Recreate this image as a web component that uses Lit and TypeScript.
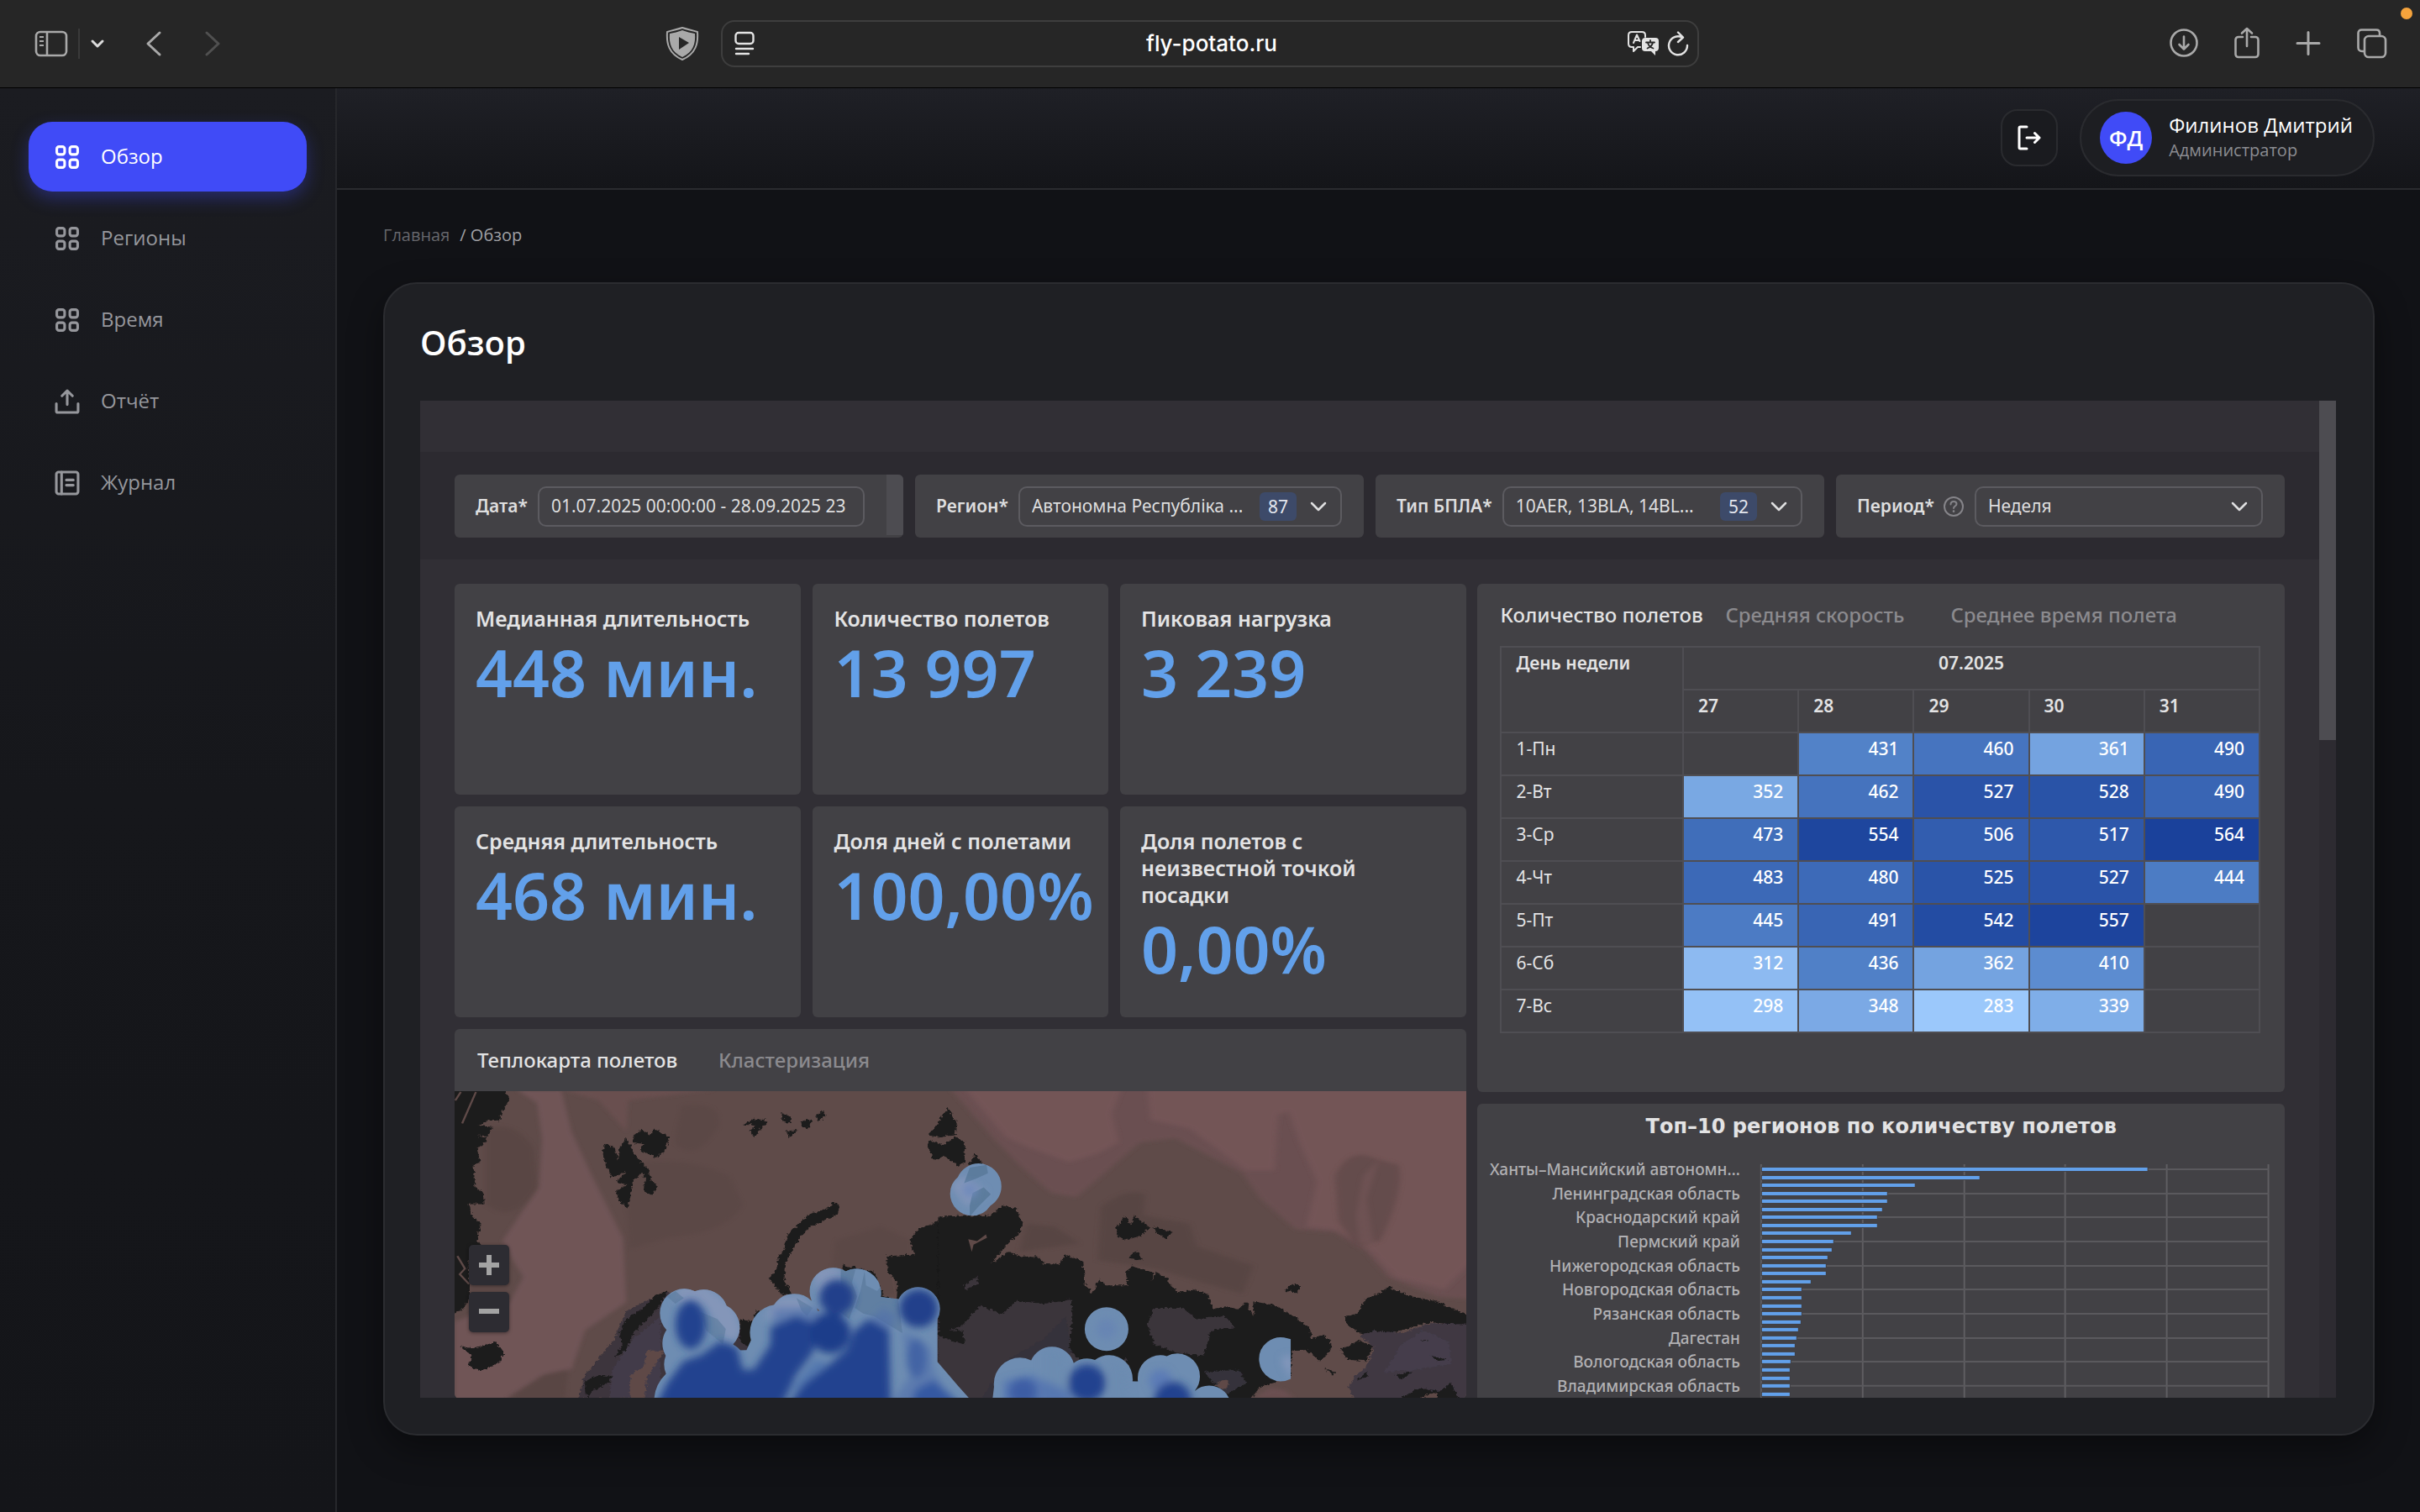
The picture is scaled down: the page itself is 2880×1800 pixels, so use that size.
import { LitElement, html, svg, css, nothing } from "lit";
import { customElement, property } from "lit/decorators.js";
import { classMap } from "lit/directives/class-map.js";
import { styleMap } from "lit/directives/style-map.js";

type NavItem = { label: string; icon: "grid" | "upload" | "book"; active?: boolean };

const NAV: NavItem[] = [
  { label: "Обзор", icon: "grid", active: true },
  { label: "Регионы", icon: "grid" },
  { label: "Время", icon: "grid" },
  { label: "Отчёт", icon: "upload" },
  { label: "Журнал", icon: "book" },
];

const KPIS = [
  { title: "Медианная длительность", value: "448 мин." },
  { title: "Количество полетов", value: "13 997" },
  { title: "Пиковая нагрузка", value: "3 239" },
  { title: "Средняя длительность", value: "468 мин." },
  { title: "Доля дней с полетами", value: "100,00%" },
  { title: "Доля полетов с неизвестной точкой посадки", value: "0,00%" },
];

const WEEKS = ["27", "28", "29", "30", "31"];
const DAYS: { day: string; values: (number | null)[] }[] = [
  { day: "1-Пн", values: [null, 431, 460, 361, 490] },
  { day: "2-Вт", values: [352, 462, 527, 528, 490] },
  { day: "3-Ср", values: [473, 554, 506, 517, 564] },
  { day: "4-Чт", values: [483, 480, 525, 527, 444] },
  { day: "5-Пт", values: [445, 491, 542, 557, null] },
  { day: "6-Сб", values: [312, 436, 362, 410, null] },
  { day: "7-Вс", values: [298, 348, 283, 339, null] },
];

const REGION_LABELS = [
  "Ханты–Мансийский автономн…",
  "Ленинградская область",
  "Краснодарский край",
  "Пермский край",
  "Нижегородская область",
  "Новгородская область",
  "Рязанская область",
  "Дагестан",
  "Вологодская область",
  "Владимирская область",
];
const REGION_BARS = [
  460, 260, 183, 150, 150, 144, 138, 138, 107, 86, 84, 79, 77, 77, 59, 48, 48, 48, 48, 47, 44, 42,
  40, 40, 35, 34, 34, 34, 34,
];

/** Three-stop scale: light blue, mid blue, dark blue. */
function heatColor(value: number): string {
  const stops = [
    [155, 200, 251],
    [85, 134, 203],
    [26, 65, 155],
  ];
  const t = ((value - 283) / (564 - 283)) * 2;
  const i = t >= 1 ? 1 : 0;
  const k = t - i;
  const rgb = stops[i].map((c, n) => Math.round(c + (stops[i + 1][n] - c) * k));
  return `rgb(${rgb.join(",")})`;
}

const chevronDown = html`<svg class="chev" viewBox="0 0 20 12" width="20" height="12" aria-hidden="true">
  <path d="M2 2l8 8 8-8" fill="none" stroke="#dededf" stroke-width="2.500" stroke-linecap="round" stroke-linejoin="round" />
</svg>`;

@customElement("browser-bar")
export class BrowserBar extends LitElement {
  static styles = css`
    :host {
      display: block;
      background: #262626;
      border-bottom: 1px solid #000;
      font-family: Inter, "Liberation Sans", sans-serif;
    }
    .bar {
      display: grid;
      grid-template-columns: 1fr 1164px 1fr;
      align-items: center;
      height: 104px;
      padding: 0 38px;
    }
    .side {
      display: flex;
      align-items: center;
    }
    .left {
      padding-left: 1px;
    }
    .right {
      justify-content: flex-end;
      gap: 41px;
    }
    button {
      display: flex;
      padding: 0;
      border: 0;
      background: none;
      color: #a9a9a9;
    }
    .split {
      width: 2px;
      height: 36px;
      margin: 0 12px;
      background: #3a3a3a;
    }
    .back {
      margin-left: 48px;
    }
    .forward {
      margin-left: 50px;
      color: #505050;
    }
    .shield {
      margin: 0 26px 0 auto;
    }
    .address {
      display: flex;
      align-items: center;
      height: 56px;
      box-sizing: border-box;
      padding: 0 10px 0 14px;
      border: 2px solid #3e3e3e;
      border-radius: 16px;
    }
    .address button {
      color: #e3e3e3;
    }
    input {
      flex: 1;
      min-width: 0;
      margin-left: 50px;
      border: 0;
      background: none;
      color: #fff;
      font: 500 26px/32px Inter, "Liberation Sans", sans-serif;
      text-align: center;
    }
    .reload {
      margin-left: 8px;
    }
    .dot {
      position: absolute;
      top: 9px;
      right: 9px;
      width: 14px;
      height: 14px;
      border-radius: 50%;
      background: #f5a33c;
    }
  `;

  render() {
    return html`<div class="bar">
      <div class="side left">
        <button aria-label="Боковое меню">
          <svg width="42" height="34" viewBox="0 0 42 34" fill="none" stroke="currentColor" stroke-width="2.600">
            <rect x="4" y="3" width="36" height="28" rx="5" />
            <path d="M17 3v28" />
            <path d="M8 9h5M8 14h5M8 19h5" stroke-width="2" />
          </svg>
        </button>
        <span class="split"></span>
        <button aria-label="Группы вкладок">
          <svg width="18" height="12" viewBox="0 0 18 12" fill="none" stroke="#dcdcdc" stroke-width="3" stroke-linecap="round" stroke-linejoin="round">
            <path d="M3 3l6 6 6-6" />
          </svg>
        </button>
        <button class="back" aria-label="Назад">
          <svg width="20" height="32" viewBox="0 0 20 32" fill="none" stroke="currentColor" stroke-width="3" stroke-linecap="round" stroke-linejoin="round">
            <path d="M17 3L3 16l14 13" />
          </svg>
        </button>
        <button class="forward" aria-label="Вперёд">
          <svg width="20" height="32" viewBox="0 0 20 32" fill="none" stroke="currentColor" stroke-width="3" stroke-linecap="round" stroke-linejoin="round">
            <path d="M3 3l14 13L3 29" />
          </svg>
        </button>
        <button class="shield" aria-label="Защита">
          <svg width="40" height="40" viewBox="0 0 40 40">
            <path d="M20 1C14 3 8 4 2 6c-1 14 2 26 18 33C36 32 39 20 38 6 32 4 26 3 20 1z" fill="none" stroke="#a9a9a9" stroke-width="2" stroke-linejoin="round" />
            <path d="M20 4c-5 2-10 3-15 4-1 12 2 22 15 28 13-6 16-16 15-28-5-1-10-2-15-4z" fill="#a9a9a9" />
            <path d="M16 12l12 7-12 8z" fill="#262626" />
          </svg>
        </button>
      </div>
      <div class="address">
        <button aria-label="Параметры страницы">
          <svg width="24" height="30" viewBox="0 0 24 30" fill="none" stroke="currentColor" stroke-width="2.400" stroke-linecap="round">
            <rect x="1.500" y="2" width="21" height="13" rx="3.500" />
            <path d="M2 21h20M2 27h15" />
          </svg>
        </button>
        <input aria-label="Адрес" .value=${"fly-potato.ru"} />
        <button aria-label="Перевод">
          <svg width="40" height="32" viewBox="0 0 40 32" fill="none" stroke="currentColor" stroke-linejoin="round" stroke-linecap="round">
            <path d="M16 20h-3l-5 5v-5H6c-3 0-4-1.500-4-4V6c0-2.500 1.500-4 4-4h12c2.500 0 4 1.500 4 4v2" stroke-width="2" />
            <path d="M8 15l4-9.500L15.500 13M9.500 12H14" stroke-width="2" />
            <path d="M22 9h12c3 0 4 1.500 4 4v8c0 2.500-1.500 4-4 4v5l-5-5h-7c-3 0-4-1.500-4-4v-8c0-2.500 1.500-4 4-4z" fill="currentColor" stroke="none" />
            <path d="M23 14.500h10M28 12v2M24.500 21.500c4-1.500 6-4 6.500-7M25 15c1 3.500 3 5.500 6.500 6.500" stroke="#262626" stroke-width="1.800" />
          </svg>
        </button>
        <button class="reload" aria-label="Обновить">
          <svg width="26" height="32" viewBox="0 0 26 32" fill="none" stroke="currentColor" stroke-width="2.400" stroke-linecap="round" stroke-linejoin="round">
            <path d="M18 8.500A11 11 0 1 0 24 18M13 2.500l6 6-6 5.500" />
          </svg>
        </button>
      </div>
      <div class="side right">
        <button aria-label="Загрузки">
          <svg width="36" height="38" viewBox="0 0 36 38" fill="none" stroke="currentColor" stroke-width="2.600" stroke-linecap="round" stroke-linejoin="round">
            <circle cx="18" cy="18" r="15.500" />
            <path d="M18 10.500v15M12.500 20l5.500 5.500 5.500-5.500" />
          </svg>
        </button>
        <button aria-label="Поделиться">
          <svg width="32" height="42" viewBox="0 0 32 42" fill="none" stroke="currentColor" stroke-width="2.600" stroke-linecap="round" stroke-linejoin="round">
            <path d="M11 13H6c-2 0-3.500 1.500-3.500 3.500v17C2.500 35.500 4 37 6 37h20c2 0 3.500-1.500 3.500-3.500v-17c0-2-1.500-3.500-3.500-3.500h-5M16 24V3M10 8.500L16 3l6 5.500" />
          </svg>
        </button>
        <button aria-label="Новая вкладка">
          <svg width="32" height="32" viewBox="0 0 32 32" fill="none" stroke="currentColor" stroke-width="3" stroke-linecap="round">
            <path d="M16 2.500v26M3 15.500h26" />
          </svg>
        </button>
        <button aria-label="Все вкладки">
          <svg width="38" height="38" viewBox="0 0 38 38" fill="none" stroke="currentColor" stroke-width="2.600">
            <rect x="10" y="10" width="25" height="25" rx="5" />
            <path d="M9.500 28H7c-3 0-4.500-2-4.500-4.500V6.500C2.500 4 4 2.500 6.500 2.500H24c2.500 0 4 1.500 4 4V9" />
          </svg>
        </button>
      </div>
      <span class="dot"></span>
    </div>`;
  }
}

@customElement("side-nav")
export class SideNav extends LitElement {
  static styles = css`
    :host {
      display: block;
      box-sizing: border-box;
      width: 401px;
      padding: 40px 34px;
      border-right: 2px solid #26272b;
      background: linear-gradient(#1b1c21, #16171b 50%, #141519);
      font-family: "Open Sans", "Noto Sans", sans-serif;
    }
    nav {
      display: flex;
      flex-direction: column;
      gap: 14px;
    }
    a {
      display: flex;
      align-items: center;
      gap: 25px;
      height: 83px;
      padding-left: 31px;
      border-radius: 28px;
      color: #96979c;
      font-size: 24px;
      line-height: 32px;
      text-decoration: none;
    }
    a span {
      padding-bottom: 2px;
    }
    a.active {
      background: #404bf7;
      color: #fff;
      box-shadow: 0 8px 20px rgba(64, 75, 247, 0.35);
    }
  `;

  private icon(kind: NavItem["icon"]) {
    if (kind === "grid") {
      return svg`<rect x="2.500" y="2.500" width="9" height="9" rx="2.500"/><rect x="17.500" y="2.500" width="9" height="9" rx="2.500"/>
        <rect x="2.500" y="17.500" width="9" height="9" rx="2.500"/><rect x="17.500" y="17.500" width="9" height="9" rx="2.500"/>`;
    }
    if (kind === "upload") {
      return svg`<path d="M2 17v8.500c0 1 .7 1.500 1.500 1.500h22c1 0 1.500-.7 1.500-1.500V17M14.500 18V3M8.500 8l6-6 6 6"/>`;
    }
    return svg`<rect x="2" y="2" width="25" height="25" rx="2.500"/><path d="M8 2v25M13.500 11h8M13.500 17h8"/>`;
  }

  render() {
    return html`<nav>
      ${NAV.map(
        (item) => html`<a href="#" class=${classMap({ active: !!item.active })}>
          <svg width="30" height="30" viewBox="0 0 29 29" fill="none" stroke="currentColor" stroke-width="3" stroke-linecap="round" stroke-linejoin="round" aria-hidden="true">
            ${this.icon(item.icon)}
          </svg>
          <span>${item.label}</span>
        </a>`,
      )}
    </nav>`;
  }
}

@customElement("filter-row")
export class FilterRow extends LitElement {
  static styles = css`
    :host {
      display: block;
      padding: 27px 41px 26px;
      background: #2c2a30;
      color: #dededf;
      font-family: "Noto Sans", sans-serif;
      font-size: 21px;
    }
    .row {
      display: grid;
      grid-template-columns: repeat(4, minmax(0, 1fr));
      gap: 14px;
    }
    .filter {
      display: flex;
      align-items: center;
      gap: 12px;
      height: 75px;
      padding: 0 26px 0 25px;
      border-radius: 6px;
      background: #424145;
      overflow: hidden;
    }
    .date {
      padding-right: 0;
    }
    label {
      padding-bottom: 2px;
      font-weight: 600;
      white-space: nowrap;
    }
    .box {
      display: flex;
      flex: 1;
      align-items: center;
      min-width: 0;
      height: 48px;
      box-sizing: border-box;
      padding: 0 16px 0 14px;
      border: 2px solid #5c5b60;
      border-radius: 10px;
    }
    .date .box {
      padding-right: 2px;
    }
    input,
    select {
      flex: 1;
      min-width: 0;
      width: 100%;
      padding: 0 0 2px;
      border: 0;
      outline: 0;
      appearance: none;
      background: none;
      color: #dededf;
      font: 400 21px/30px "Noto Sans", sans-serif;
    }
    .badge {
      margin-right: 16px;
      padding: 0 10px;
      border-radius: 6px;
      background: #3d4a69;
      color: #e3e6ee;
      line-height: 34px;
    }
    .chev {
      flex: none;
    }
    .thumb {
      align-self: flex-start;
      width: 20px;
      height: 72px;
      margin-left: 14px;
      background: #4d4c51;
    }
    .help {
      display: flex;
      margin: 0 0 0 -2px;
      padding: 0;
      border: 0;
      background: none;
    }
  `;

  private dropdown(id: string, label: string, value: string, count?: string, help = false) {
    return html`<div class="filter">
      <label for=${id}>${label}</label>
      ${help
        ? html`<button class="help" aria-label="Подсказка">
            <svg width="26" height="26" viewBox="0 0 26 26" fill="none" stroke="#858489" stroke-width="2" stroke-linecap="round">
              <circle cx="13" cy="13" r="11" />
              <path d="M9.500 10.500c0-5 7-4.500 7-.5 0 2.500-3.500 2.500-3.500 5" />
              <path d="M13 18.500v.2" stroke-width="2.600" />
            </svg>
          </button>`
        : nothing}
      <div class="box">
        <select id=${id}>
          <option>${value}</option>
        </select>
        ${count ? html`<span class="badge">${count}</span>` : nothing} ${chevronDown}
      </div>
    </div>`;
  }

  render() {
    return html`<div class="row">
      <div class="filter date">
        <label for="date">Дата*</label>
        <div class="box"><input id="date" .value=${"01.07.2025 00:00:00 - 28.09.2025 23"} /></div>
        <span class="thumb"></span>
      </div>
      ${this.dropdown("region", "Регион*", "Автономна Республіка ...", "87")}
      ${this.dropdown("type", "Тип БПЛА*", "10AER, 13BLA, 14BL...", "52")}
      ${this.dropdown("period", "Период*", "Неделя", undefined, true)}
    </div>`;
  }
}

@customElement("week-table")
export class WeekTable extends LitElement {
  static styles = css`
    :host {
      display: block;
    }
    table {
      width: 100%;
      border-collapse: collapse;
      table-layout: fixed;
      color: #e3e3e4;
      font: 400 21px/28px "Noto Sans", sans-serif;
    }
    th,
    td {
      height: 42px;
      padding: 4px 17px 3px;
      border: 2px solid #4f4e53;
      text-align: left;
      vertical-align: top;
      font-weight: 400;
    }
    .first {
      box-sizing: border-box;
      width: 24%;
    }
    thead th {
      font-weight: 600;
    }
    thead .month {
      text-align: center;
    }
    td {
      color: #fff;
      font-weight: 500;
      text-align: right;
    }
  `;

  render() {
    return html`<table>
      <thead>
        <tr>
          <th class="first" rowspan="2">День недели</th>
          <th class="month" colspan="5">07.2025</th>
        </tr>
        <tr>
          ${WEEKS.map((w) => html`<th>${w}</th>`)}
        </tr>
      </thead>
      <tbody>
        ${DAYS.map(
          (row) => html`<tr>
            <th>${row.day}</th>
            ${row.values.map((v) =>
              v === null ? html`<td></td>` : html`<td style=${styleMap({ background: heatColor(v) })}>${v}</td>`,
            )}
          </tr>`,
        )}
      </tbody>
    </table>`;
  }
}

@customElement("regions-chart")
export class RegionsChart extends LitElement {
  static styles = css`
    :host {
      display: block;
      text-align: center;
    }
    h2 {
      margin: 0;
      padding: 10px 0;
      color: #e3e3e4;
      font: 700 24px/34px "DejaVu Sans", "Noto Sans", sans-serif;
    }
    svg {
      display: block;
      width: 100%;
    }
    text {
      fill: #b1b0b3;
      font: 500 19px "Noto Sans", sans-serif;
    }
  `;

  render() {
    const left = 338;
    const right = 942;
    const top = 20;
    const step = 9.56;
    const gridX = [0, 1, 2, 3, 4, 5].map((i) => Math.round(left + ((right - left) * i) / 5));
    return html`<h2>Топ–10 регионов по количеству полетов</h2>
      <svg viewBox="0 0 961 320" role="img" aria-label="Топ–10 регионов">
        ${gridX.map((x) => svg`<path d="M${x} 18V320" stroke="#5f5e62" stroke-width="2"/>`)}
        ${REGION_LABELS.map((label, i) => {
          const y = Math.round(top + 4 + i * step * 3);
          return svg`<path d="M${left} ${y}H${right}" stroke="#5a595d" stroke-width="2"/>
            <text x="313" y=${y + 7} text-anchor="end">${label}</text>`;
        })}
        ${REGION_BARS.map((w, i) => {
          const y = Math.round(top + 2 + i * step);
          return svg`<rect x=${left} y=${y - 1} width=${w + 1} height="6" fill="#424145"/>
            <rect x=${left + 1} y=${y} width=${w - 1} height="4" fill="#62a0ea"/>`;
        })}
      </svg>`;
  }
}

@customElement("flight-map")
export class FlightMap extends LitElement {
  static styles = css`
    :host {
      display: block;
      position: relative;
      overflow: hidden;
      background: #5f4b49;
    }
    .canvas {
      display: block;
      width: 100%;
    }
    .zoom {
      position: absolute;
      left: 17px;
      top: 183px;
      display: flex;
      flex-direction: column;
      gap: 8px;
    }
    button {
      display: flex;
      align-items: center;
      justify-content: center;
      width: 48px;
      height: 48px;
      padding: 0;
      border: 0;
      border-radius: 5px;
      background: #2d2c32;
      box-shadow: 0 1px 4px rgba(0, 0, 0, 0.4);
    }
  `;

  private west() {
    return svg`<g transform="matrix(0.40816 0 0 0.33333 -40.8 -99)">
      <path fill="#705456" filter="url(#soft)" d="M280 290L340 340 355 470 345 640 240 830 270 900 300 960 260 1050 160 1090 100 1120V1400H250L360 1310 440 1290 480 1150 600 1050 590 820 500 600 440 440 410 290z"/>
      <path fill="#694f50" filter="url(#soft)" d="M410 290L520 330 600 440 605 330 860 290z"/>
      <path fill="#554341" opacity=".5" filter="url(#soft)" d="M190 430Q280 400 330 500L340 640Q270 780 190 700zM250 1392L360 1310 430 1290 420 1392z"/>
      <path fill="#574443" opacity=".4" filter="url(#soft)" d="M590 560Q760 520 900 600L940 700Q900 800 720 820L610 860zM760 350Q880 330 870 420Q800 560 740 480zM1210 830L1340 780 1430 830V1000L1180 1100z"/>
      <g filter="url(#jag)">
        <path fill="#3c343c" d="M720 1010L600 1080 560 1190 480 1310 460 1392H1568V1000L1500 1110 1200 1180 900 1140z"/>
        <path fill="#423b49" d="M700 1100L620 1180 560 1290 550 1392H700z"/>
        <path fill="#5f4a47" d="M660 1220L710 1225 660 1320 655 1392H610L612 1310 650 1280z"/>
        <g fill="#1b1b1b">
          <path d="M90 280H240L260 325 238 372 228 405 200 400 170 420 212 425 195 455 165 455 195 465 185 490 165 500 175 550 155 560 160 640 185 660 187 700 140 700 150 740 175 770 165 830 178 850 140 900 145 1040 120 1080 90 1095z"/>
          <path d="M530 510L540 485 565 495 575 545 580 500 600 465 625 520 640 545 660 570 675 620 692 635 675 668 650 655 655 610 645 585 620 620 610 690 600 715 580 690 570 655 600 630 570 620 600 585 560 605 540 560z"/>
          <path d="M620 455L645 435 670 455 680 430 725 462 710 515 685 533 655 515 640 510 650 485 620 480z"/>
          <path d="M940 415L975 395 1000 400 1015 405 990 430 975 462 960 440 975 420zM1050 375L1080 390 1082 410 1062 412zM1065 440L1100 435 1075 462zM1110 405L1140 395 1135 430 1110 425zM1150 390L1172 365 1180 385 1160 408z"/>
          <path d="M1222 705L1205 692 1185 715 1130 738 1085 790 1068 815 1060 860 1042 890 1038 930 1016 965 1030 985 1050 1020 1082 1022 1060 970 1065 910 1085 860 1110 810 1140 780 1200 745 1215 735z"/>
          <path d="M115 1205L150 1215 180 1205 220 1192 245 1235 225 1270 178 1295 140 1278 150 1240z"/>
          <path d="M480 1330L520 1310 560 1315 545 1340 500 1365 490 1392 480 1370zM720 1008L680 1030 640 1080 600 1110 580 1160 590 1200 565 1250 600 1220 620 1160 670 1100 700 1060z"/>
          <path d="M1568 745L1510 760 1450 790 1425 830 1440 880 1358 886 1362 940 1390 980 1388 1040 1350 1030 1320 940 1230 918 1230 1000 1400 1060H1500L1520 1130 1568 1220z"/>
          <path d="M975 1080L1000 1085 960 1220 930 1180 930 1110 970 1120z"/>
        </g>
      </g>
      <path fill="none" stroke="#5f4a48" stroke-width="6" d="M162 300L122 412M108 885L130 930 115 950 142 985M1375 960L1385 1035M102 330L118 300"/>
    </g>`;
  }

  private east() {
    return svg`<g transform="matrix(0.42092 0 0 0.33333 579 -99)">
      <path fill="#6b5051" filter="url(#soft)" d="M20 280L150 470 220 560 310 660 380 675 450 600 560 480 660 465 850 590 900 680 1000 790 1110 800 1200 870 1260 960 1400 1030 1500 1040V280z"/>
      <path fill="#735557" filter="url(#soft)" d="M60 280L180 460 250 500 360 550 440 520 500 480 480 380 510 280z"/>
      <path fill="#735557" filter="url(#soft)" d="M580 280L590 400 700 430 860 580 940 580 950 380 980 370 1010 480 1060 620 1030 780 1110 790 1190 840 1280 960 1420 1005 1510 890V270z"/>
      <path fill="#614948" opacity=".75" filter="url(#soft)" d="M1110 600Q1150 490 1230 540L1290 560Q1310 640 1240 830L1170 850 1120 760z"/>
      <path fill="#755759" opacity=".6" filter="url(#soft)" d="M1190 600L1235 540 1200 680 1220 840 1180 840 1170 740z"/>
      <path fill="#534241" opacity=".6" filter="url(#soft)" d="M450 710Q520 640 575 665L570 740 700 770 720 850 880 920 850 1020 600 930 440 900zM240 770L320 780 390 840 220 870z"/>
      <g filter="url(#jag)">
        <path fill="#1b1b1b" d="M-10 745L140 740 170 705 210 715 227 765 222 800 180 850 138 912 190 870 220 885 280 890 285 910 335 915 345 880 400 905 405 985 425 1020 445 970 465 990 500 990 525 990 520 940 540 922 600 945 590 975 605 945 640 965 640 980 670 1015 715 1005 752 1025 768 1075 800 1065 840 1075 860 1050 880 1100 880 1047 945 1062 1000 1105 1040 1145 1045 1180 1080 1165 1105 1205 1070 1262 1030 1220 990 1225 985 1320 900 1350 870 1400H-10z"/>
        <path fill="#3b343b" d="M-10 1170L60 1130 110 1060 170 1095 210 1045 290 1055 365 1040 370 1110 360 1220 420 1290 520 1250 545 1350 800 1400H-10zM580 1130L600 1070 680 1070 720 1110 800 1100 830 1140 760 1150 740 1240 660 1230 600 1200zM60 990L105 955 100 985 70 1005z"/>
        <path fill="#35333a" d="M110 1400L180 1260 290 1180 350 1100 365 1220 330 1400zM740 1300L840 1290 860 1340 800 1380z"/>
        <g fill="#1b1b1b">
          <path d="M-10 1150L60 1150 65 1200 30 1190 -10 1165zM370 1100L400 1180 400 1260 360 1210z"/>
          <path d="M18 357L43 410 38 450 0 462 -36 455zM-36 470L0 490 40 460 67 480 65 550 50 565 10 530 -20 545 -40 495zM75 560L95 520 118 560z"/>
          <path d="M492 790L515 742 535 775 545 742 587 783 560 815 515 827 500 820zM597 780L625 790 652 800 632 823 610 805zM527 892L550 868 568 900zM970 1010L990 982 1015 995 1000 1015zM1080 1285L1113 1300 1105 1308z"/>
          <path d="M1500 1105L1405 1050 1330 1030 1300 1015 1260 995 1240 1015 1195 1040 1175 1090 1140 1100 1145 1130 1190 1165 1270 1160 1380 1120 1500 1140z"/>
          <path d="M1127 1220L1175 1187 1220 1205 1200 1260 1145 1255z"/>
        </g>
        <path fill="#3f3843" d="M1500 1130L1380 1125 1300 1160 1220 1150 1180 1170 1222 1210 1200 1280 1170 1310 1150 1350 1165 1400H1500z"/>
        <path fill="#453e4c" d="M1300 1200L1360 1150 1430 1190 1440 1270 1340 1290 1250 1300z"/>
        <path fill="#1b1b1b" d="M1170 1330L1205 1295 1200 1315zM1285 1400L1350 1355 1400 1370 1440 1340 1465 1400zM1350 1185L1372 1185 1368 1190zM1280 1310L1330 1295 1300 1325zM1380 1240L1430 1255 1400 1260z"/>
        <path fill="#5f4a47" d="M1380 1375H1400V1392H1350zM795 1325L810 1330 805 1360 770 1350z"/>
      </g>
      <path fill="#6b5051" filter="url(#soft)" d="M880 1392L930 1355 970 1365 995 1392z"/>
      <path fill="#5f4a48" d="M75 825L100 832 125 808 128 820 90 845 85 870z"/>
    </g>`;
  }

  /** Density inside the clusters, in units of a third of a map pixel. */
  private density() {
    return svg`<g transform="matrix(0.33333 0 0 0.33333 199 71)">
      <g fill="#8496b9" filter="url(#glow)">
        <path d="M200 480H300L400 560 430 650 380 690 300 560 190 540zM680 420L760 410 790 450 700 520zM560 520H640L680 560 600 590 500 600z" />
        <path d="M1170 120L1220 90 1300 150 1230 200z" />
      </g>
      <g fill="#5c7c9d">
        <path d="M780 415L832 425 820 470 838 520 810 600 760 560 780 490zM865 430L870 480 910 500 925 480V520L985 530 1000 650 900 590 860 580 830 560 850 500z" opacity=".8" />
        <path d="M1220 115L1240 60 1300 50 1305 80 1260 100zM1240 195L1250 150 1290 130 1315 155 1270 200 1240 235z" />
        <path d="M280 575L340 600 370 635 360 690 300 640zM160 520L190 500 220 525 190 545zM622 525L680 560 660 590 640 570z" opacity=".6" />
      </g>
      <g filter="url(#glow)">
        <path d="M540 560L680 560 780 620 850 640 930 560 980 590 940 660H540zM1000 640L1100 700 1110 780 1180 900H960L1030 800z" fill="#4f6eac" opacity=".6" />
        <path d="M120 910L160 830 220 750 280 730 350 680 410 700 430 780 470 780 530 690 530 630 620 590 700 620 680 720 620 800 570 910z" fill="#22428f" />
        <path d="M590 910L650 830 730 770 800 710 830 640 880 600 952 640 958 910z" fill="#22428f" />
        <path d="M1030 910L1050 850 1110 820 1170 870 1210 910z" fill="#3558a2" />
        <path d="M640 800L690 740 740 760 700 790 620 860 600 850z" fill="#4a6fae" opacity=".7" />
        <ellipse cx="245" cy="620" rx="54" ry="86" fill="#22428f" />
        <circle cx="742" cy="650" r="72" fill="#1f3e8a" />
        <circle cx="767" cy="522" r="62" fill="#203f8b" />
        <circle cx="1058" cy="562" r="68" fill="#203f8b" />
        <circle cx="1058" cy="562" r="56" fill="#203f8b" />
        <ellipse cx="1050" cy="740" rx="34" ry="70" fill="#4363a4" />
        <circle cx="1240" cy="140" r="26" fill="#6f8abc" />
      </g>
    </g>
    <g transform="matrix(0.33333 0 0 0.33333 599 71)" filter="url(#glow)">
      <circle cx="527" cy="635" r="36" fill="#6885b3" />
      <path d="M300 700L380 720 390 900H300zM540 740L600 780 610 900H540z" fill="#6c8bb0" />
      <path d="M160 820L260 800 400 860 400 910H160z" fill="#4a6bb0" opacity=".6" />
      <circle cx="230" cy="860" r="48" fill="#3c5da4" />
      <circle cx="458" cy="828" r="66" fill="#22428f" />
      <circle cx="458" cy="828" r="52" fill="#22428f" />
      <circle cx="720" cy="820" r="40" fill="#5c7cb6" />
      <circle cx="764" cy="890" r="66" fill="#22428f" />
      <circle cx="764" cy="890" r="48" fill="#22428f" />
      <path d="M1150 740L1190 730V820z" fill="#8799bd" />
    </g>`;
  }

  render() {
    const blobs = svg`
      <circle cx="273" cy="264" r="29"/><circle cx="296" cy="265" r="29"/><circle cx="310" cy="281" r="29"/>
      <circle cx="276" cy="300" r="29"/><circle cx="277" cy="325" r="28"/><circle cx="284" cy="370" r="47"/><circle cx="315" cy="330" r="33"/>
      <circle cx="384" cy="287" r="33"/><circle cx="404" cy="270" r="29"/><circle cx="450" cy="238" r="28"/><circle cx="478" cy="240" r="29"/>
      <circle cx="551" cy="259" r="26"/>
      <path d="M347 308L355 290 400 260 430 262 500 244 535 248 574 270V322L599 351 616 370H290V310z"/>
      <circle cx="623" cy="113" r="27"/><circle cx="615" cy="122" r="26"/>
      <circle cx="775" cy="283" r="26"/>
      <path d="M994 295V342A26 26 0 1 1 990 294z"/>
      <circle cx="672" cy="348" r="31"/><circle cx="710" cy="331" r="27"/><circle cx="752" cy="345" r="27"/><circle cx="778" cy="342" r="28"/>
      <circle cx="839" cy="341" r="27"/><circle cx="859" cy="339" r="27"/><circle cx="897" cy="376" r="26"/><path d="M642 345H880V370H639z"/>`;
    return html`<svg class="canvas" viewBox="0 0 1203 366" aria-label="Теплокарта полетов" role="img">
        <defs>
          <filter id="soft" x="-10%" y="-10%" width="120%" height="120%"><feGaussianBlur stdDeviation="7" /></filter>
          <filter id="jag" x="-5%" y="-5%" width="110%" height="110%">
            <feTurbulence type="fractalNoise" baseFrequency="0.1" numOctaves="3" seed="4" result="n" />
            <feDisplacementMap in="SourceGraphic" in2="n" scale="16" xChannelSelector="R" yChannelSelector="G" />
          </filter>
          <filter id="glow" x="-20%" y="-20%" width="140%" height="140%"><feGaussianBlur stdDeviation="14" /></filter>
          <clipPath id="heat">${blobs}</clipPath>
        </defs>
        ${this.west()} ${this.east()}
        <g clip-path="url(#heat)">
          <rect width="1203" height="370" fill="#6e8db2" />
          ${this.density()}
        </g>
      </svg>
      <div class="zoom">
        <button aria-label="Приблизить">
          <svg width="24" height="24" viewBox="0 0 24 24"><path d="M12 0v24M0 12h24" stroke="#a3a3a3" stroke-width="6" /></svg>
        </button>
        <button aria-label="Отдалить">
          <svg width="24" height="24" viewBox="0 0 24 24"><path d="M0 11h24" stroke="#a3a3a3" stroke-width="6" /></svg>
        </button>
      </div>`;
  }
}

@customElement("tab-strip")
export class TabStrip extends LitElement {
  @property({ attribute: false }) tabs: string[] = [];

  static styles = css`
    :host {
      display: flex;
      align-items: center;
      height: 74px;
      padding-left: 27px;
    }
    button {
      min-width: var(--tab-width, 268px);
      padding: 0;
      border: 0;
      background: none;
      color: #8b8a8e;
      font: 500 24px/36px "Noto Sans", sans-serif;
      text-align: left;
      white-space: nowrap;
    }
    button:first-of-type {
      color: #e3e3e4;
    }
  `;

  render() {
    return this.tabs.map((t) => html`<button>${t}</button>`);
  }
}

@customElement("app-root")
export class AppRoot extends LitElement {
  static styles = css`
    :host {
      display: flex;
      flex-direction: column;
      height: 100vh;
      background: #111216;
      color: #fff;
      font-family: "Open Sans", "Noto Sans", sans-serif;
    }
    .page {
      display: flex;
      flex: 1;
      min-height: 0;
    }
    .content {
      display: flex;
      flex: 1;
      flex-direction: column;
      min-width: 0;
    }
    header {
      display: flex;
      align-items: center;
      justify-content: flex-end;
      gap: 26px;
      height: 117px;
      padding: 0 54px 2px 0;
      border-bottom: 2px solid #2a2b2f;
      background: linear-gradient(#1f2026, #141519);
    }
    .logout {
      display: flex;
      align-items: center;
      justify-content: center;
      width: 68px;
      height: 68px;
      padding: 0;
      border: 2px solid #2a2b2f;
      border-radius: 20px;
      background: #1a1b1f;
    }
    .user {
      display: flex;
      align-items: center;
      gap: 20px;
      height: 92px;
      box-sizing: border-box;
      padding: 0 24px 0 22px;
      border: 2px solid #2a2b2f;
      border-radius: 46px;
      background: #1d1e22;
    }
    .avatar {
      display: grid;
      place-items: center;
      width: 62px;
      height: 62px;
      border-radius: 50%;
      background: #404bf7;
      font-size: 26px;
      font-weight: 600;
    }
    .name {
      font-size: 24px;
      line-height: 30px;
    }
    .role {
      color: #8b8c91;
      font-size: 20px;
      line-height: 30px;
    }
    main {
      display: flex;
      flex: 1;
      flex-direction: column;
      min-height: 0;
      padding: 38px 54px 91px 55px;
    }
    .crumbs {
      display: flex;
      gap: 12px;
      margin-bottom: 40px;
      color: #a0a1a5;
      font-size: 20px;
      line-height: 32px;
    }
    .crumbs a {
      color: #66676c;
      text-decoration: none;
    }
    .card {
      display: flex;
      flex: 1;
      flex-direction: column;
      min-height: 0;
      padding: 42px 44px 43px 42px;
      border: 2px solid #2b2c30;
      border-radius: 40px;
      background: #1f2024;
      box-shadow: 0 16px 40px rgba(0, 0, 0, 0.4);
    }
    h1 {
      margin: 0 0 41px;
      font-size: 40px;
      font-weight: 600;
      line-height: 56px;
    }
    .dash {
      display: flex;
      flex: 1;
      min-height: 0;
      overflow: hidden;
      background: #312f35;
    }
    .scroll {
      width: 20px;
      background: #2d2b31;
    }
    .scroll-thumb {
      height: 34%;
      background: #4d4c51;
    }
    .body {
      display: flex;
      flex: 1;
      flex-direction: column;
      min-width: 0;
      padding-top: 61px;
    }
    .widgets {
      display: grid;
      grid-template-columns: 1205fr 961fr;
      gap: 13px;
      padding: 29px 41px 0;
      flex: 1;
      min-height: 0;
    }
    .col {
      display: flex;
      flex-direction: column;
      gap: 14px;
      min-width: 0;
    }
    .kpis {
      display: grid;
      grid-template-columns: 413fr 352fr 413fr;
      gap: 14px;
    }
    .panel {
      border-radius: 6px;
      background: #424145;
    }
    .kpi {
      box-sizing: border-box;
      height: 251px;
      padding: 25px;
      font-family: "Noto Sans", sans-serif;
      min-width: 0;
    }
    .kpi h3 {
      margin: 0;
      padding-right: 12px;
      color: #e3e3e4;
      font-size: 25px;
      font-weight: 600;
      line-height: 32px;
    }
    .kpi p {
      margin: 0;
      color: #62a0ea;
      font-size: 77px;
      font-weight: 600;
      line-height: 98px;
      white-space: nowrap;
    }
    .map {
      --tab-width: 287px;
      overflow: hidden;
      flex: none;
    }
    .weeks {
      flex: none;
      height: 605px;
    }
    week-table {
      margin: 0 29px 0 27px;
    }
    .regions {
      flex: none;
    }
  `;

  render() {
    return html`<browser-bar></browser-bar>
      <div class="page">
        <side-nav></side-nav>
        <div class="content">
          <header>
            <button class="logout" aria-label="Выйти">
              <svg width="28" height="30" viewBox="0 0 28 30" fill="none" stroke="#fff" stroke-width="3" stroke-linecap="round" stroke-linejoin="round">
                <path d="M11 2H3.500C2.500 2 2 2.500 2 3.500v23c0 1 .5 1.500 1.500 1.500H11M11 15h15M20.500 9.500L26 15l-5.500 5.500" />
              </svg>
            </button>
            <div class="user">
              <span class="avatar">ФД</span>
              <div>
                <div class="name">Филинов Дмитрий</div>
                <div class="role">Администратор</div>
              </div>
            </div>
          </header>
          <main>
            <nav class="crumbs"><a href="#">Главная</a><span>/ Обзор</span></nav>
            <section class="card">
              <h1>Обзор</h1>
              <div class="dash">
                <div class="body">
                  <filter-row></filter-row>
                  <div class="widgets">
                    <div class="col">
                      <div class="kpis">
                        ${KPIS.map(
                          (k) => html`<article class="panel kpi">
                            <h3>${k.title}</h3>
                            <p>${k.value}</p>
                          </article>`,
                        )}
                      </div>
                      <div class="panel map">
                        <tab-strip .tabs=${["Теплокарта полетов", "Кластеризация"]}></tab-strip>
                        <flight-map></flight-map>
                      </div>
                    </div>
                    <div class="col">
                      <div class="panel weeks">
                        <tab-strip .tabs=${["Количество полетов", "Средняя скорость", "Среднее время полета"]}></tab-strip>
                        <week-table></week-table>
                      </div>
                      <div class="panel regions"><regions-chart></regions-chart></div>
                    </div>
                  </div>
                </div>
                <div class="scroll"><div class="scroll-thumb"></div></div>
              </div>
            </section>
          </main>
        </div>
      </div>`;
  }
}
